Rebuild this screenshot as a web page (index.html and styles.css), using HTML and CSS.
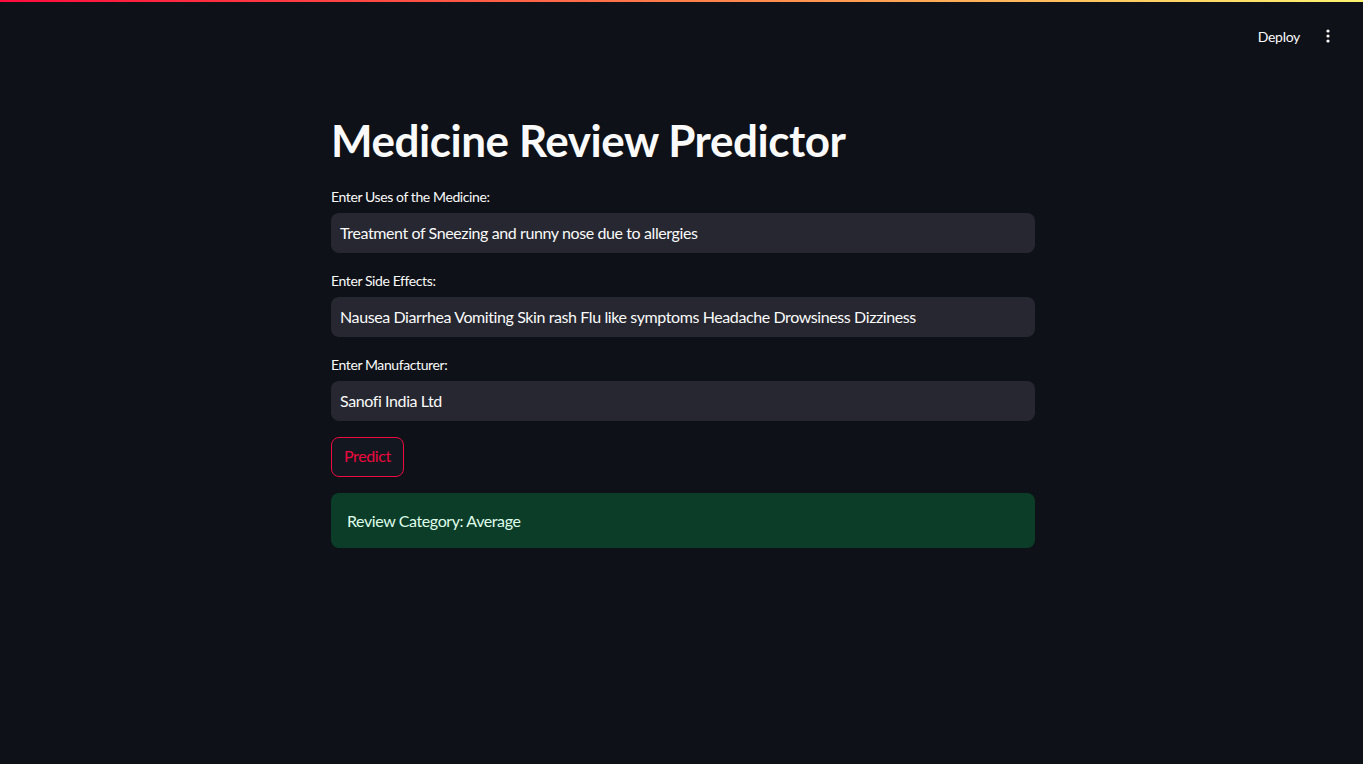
FILE: index.html
```html
<!DOCTYPE html>
<html lang="en">
<head>
<meta charset="utf-8">
<title>Medicine Review Predictor</title>
<link rel="stylesheet" href="styles.css">
</head>
<body>
<div class="decoration"></div>
<header class="header">
  <button class="deploy">Deploy</button>
  <button class="menu" aria-label="Main menu">
    <svg width="16" height="16" viewBox="0 0 16 16"><circle cx="8" cy="3" r="1.6" fill="#fafafa"/><circle cx="8" cy="8" r="1.6" fill="#fafafa"/><circle cx="8" cy="13" r="1.6" fill="#fafafa"/></svg>
  </button>
</header>
<main class="main">
  <div class="block">
    <h1 class="title">Medicine Review Predictor</h1>
    <div class="field">
      <label class="label">Enter Uses of the Medicine:</label>
      <div class="input">Treatment of Sneezing and runny nose due to allergies</div>
    </div>
    <div class="field">
      <label class="label">Enter Side Effects:</label>
      <div class="input">Nausea Diarrhea Vomiting Skin rash Flu like symptoms Headache Drowsiness Dizziness</div>
    </div>
    <div class="field">
      <label class="label">Enter Manufacturer:</label>
      <div class="input">Sanofi India Ltd</div>
    </div>
    <div class="row"><button class="predict">Predict</button></div>
    <div class="alert">Review Category: Average</div>
  </div>
</main>
</body>
</html>
```

FILE: styles.css
```css
html, body {
  margin: 0;
  padding: 0;
  background: #0e1117;
  color: #fafafa;
  font-family: Lato, "Noto Sans", sans-serif;
  letter-spacing: -0.4px;
  height: 100%;
}
.decoration {
  height: 2px;
  background: linear-gradient(90deg, #ff0a3c, #ff8a4c 55%, #fff570);
}
.header {
  height: 48px;
  padding: 10px 19px 0 0;
  display: flex;
  justify-content: flex-end;
  align-items: center;
}
.deploy {
  background: transparent;
  border: none;
  color: #fafafa;
  font-family: inherit;
  letter-spacing: -0.3px;
  font-size: 14px;
  height: 32px;
  padding: 0 12px;
}
.menu {
  background: transparent;
  border: none;
  width: 32px;
  height: 32px;
  padding: 0;
  display: flex;
  align-items: center;
  justify-content: center;
}
.main {
  display: flex;
  justify-content: center;
  padding: 54px 0 0 3px;
}
.block {
  width: 704px;
  display: flex;
  flex-direction: column;
  gap: 16px;
}
.title {
  margin: 0 0 3px;
  font-size: 44px;
  line-height: 52px;
  font-weight: 700;
  letter-spacing: -0.45px;
}
.field {
  display: flex;
  flex-direction: column;
}
.label {
  font-size: 14px;
  line-height: 20px;
  padding-top: 2px;
  margin-bottom: 6px;
}
.input {
  height: 40px;
  box-sizing: border-box;
  background: #262730;
  border-radius: 8px;
  padding: 0 9px 1px;
  font-size: 16px;
  display: flex;
  align-items: center;
}
.row {
  display: flex;
}
.predict {
  height: 40px;
  padding: 0 12px 3px;
  border: 1px solid #ec0a3e;
  border-radius: 8px;
  background: #131720;
  color: #ec0a3e;
  font-family: inherit;
  letter-spacing: -0.4px;
  font-size: 16px;
}
.alert {
  height: 55px;
  box-sizing: border-box;
  padding: 0 16px;
  display: flex;
  align-items: center;
  background: #0c3d29;
  color: #dffde9;
  border-radius: 8px;
  font-size: 16px;
}
```
